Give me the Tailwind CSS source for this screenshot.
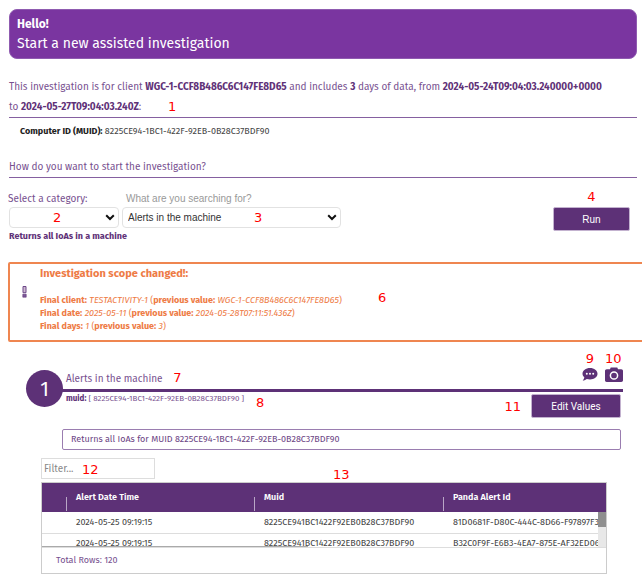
<!DOCTYPE html>
<html lang="en">
  <head>
    <meta charset="UTF-8" />
    <meta name="viewport" content="width=device-width, initial-scale=1.0" />
    <title>Assisted investigation</title>
    <script src="https://cdn.jsdelivr.net/npm/@tailwindcss/browser@4"></script>
  </head>
  <body class="overflow-x-hidden bg-white font-['Fira_Sans','Noto_Sans',sans-serif] text-[#5f3278]">
    <div class="pt-[9px] pr-[5px] pl-[9px]">
      <header class="rounded-lg border border-[#8f5bb0] bg-[#7a35a0] px-[7px] py-1 text-white">
        <p class="text-xs leading-5 font-bold">Hello!</p>
        <h1 class="text-sm leading-5">Start a new assisted investigation</h1>
      </header>

      <section class="relative mt-[18px] border-b border-[#8560a0] text-[10px] leading-5 text-[#77508f]">
        <p>
          This investigation is for client <b class="text-[#5f3278]">WGC-1-CCF8B486C6C147FE8D65</b> and includes
          <b class="text-[#5f3278]">3</b> days of data, from <b class="text-[#5f3278]">2024-05-24T09:04:03.240000+0000</b><br />
          to <b class="text-[#5f3278]">2024-05-27T09:04:03.240Z</b>:
        </p>
        <span class="absolute bottom-0 left-[159px] font-['DejaVu_Sans',sans-serif] text-[13px] text-[#f00]">1</span>
      </section>

      <p class="mt-[5px] pl-[11px] text-[9px] leading-4 text-[#444]">
        <b class="text-[#222]">Computer ID (MUID):</b> 8225CE94-1BC1-422F-92EB-0B28C37BDF90
      </p>

      <h2 class="mt-[18px] border-b border-[#8560a0] text-[10px] leading-5 text-[#77508f]">How do you want to start the investigation?</h2>

      <form class="mt-[13px] flex items-start justify-between pr-[7px]">
        <div>
          <div class="flex gap-[3px]">
            <div class="w-[110px]">
              <label for="category" class="-ml-px block text-[10px] leading-4 text-[#77508f]">Select a category:</label>
              <div class="relative">
                <select id="category" class="block h-[21px] w-full appearance-none rounded-sm border border-[#e2e2e2] bg-white px-[5px]">
                  <option></option>
                </select>
                <svg class="pointer-events-none absolute top-[7px] right-1 h-[7px] w-2.5" viewBox="0 0 10 7" fill="none" stroke="#111" stroke-width="2"><path d="M1.2 1.2 5 5l3.800-3.800" /></svg>
                <span class="absolute top-0 left-11 font-['DejaVu_Sans',sans-serif] text-[13px] leading-[22px] text-[#f00]">2</span>
              </div>
            </div>
            <div class="w-[219px]">
              <label for="search" class="block pl-1 font-['Liberation_Sans',sans-serif] text-[10px] leading-4 text-[#999]">What are you searching for?</label>
              <div class="relative">
                <select id="search" class="block h-[21px] w-full appearance-none rounded-sm border border-[#e2e2e2] bg-white px-[5px] font-['Liberation_Sans',sans-serif] text-[10px] text-[#333]">
                  <option>Alerts in the machine</option>
                </select>
                <svg class="pointer-events-none absolute top-[7px] right-1 h-[7px] w-2.5" viewBox="0 0 10 7" fill="none" stroke="#111" stroke-width="2"><path d="M1.2 1.2 5 5l3.800-3.800" /></svg>
                <span class="absolute top-0 left-[132px] font-['DejaVu_Sans',sans-serif] text-[13px] leading-[22px] text-[#f00]">3</span>
              </div>
            </div>
          </div>
          <p class="text-[9px] leading-4 font-bold">Returns all IoAs in a machine</p>
        </div>
        <div class="relative pt-4">
          <span class="absolute -top-px inset-x-0 text-center font-['DejaVu_Sans',sans-serif] text-[13px] leading-none text-[#f00]">4</span>
          <button type="button" class="block h-6 w-[77px] rounded-xs border border-[#c3b2cf] bg-[#5d3177] font-['Liberation_Sans',sans-serif] text-[10px] text-white">Run</button>
        </div>
      </form>
    </div>

    <section class="relative mt-[18px] -mr-1 ml-2 flex rounded-xs border-2 border-[#ef8650] pt-px pb-[7px] text-[#ee7b45]">
      <svg class="mt-[21px] ml-3 h-3 w-[5px] shrink-0" viewBox="0 0 5 12">
        <path d="M1 .5h3v6.200H1Z" fill="#cdb8d2" stroke="#6c4788" />
        <path d="M.8 8.200h3.400v3H.8Z" fill="#7b5998" stroke="#5f3278" stroke-width=".6" />
      </svg>
      <div class="ml-[13px] text-[9px] leading-[13px]">
        <h3 class="mb-[11px] text-[11px] leading-[18px] font-bold">Investigation scope changed!:</h3>
        <p><b>Final client:</b> <i>TESTACTIVITY-1</i> (<b>previous value:</b> <i>WGC-1-CCF8B486C6C147FE8D65</i>)</p>
        <p><b>Final date:</b> <i>2025-05-11</i> (<b>previous value:</b> <i>2024-05-28T07:11:51.436Z</i>)</p>
        <p><b>Final days:</b> <i>1</i> (<b>previous value:</b> <i>3</i>)</p>
      </div>
      <span class="absolute top-[26px] left-[368px] font-['DejaVu_Sans',sans-serif] text-[13px] leading-4 text-[#f00]">6</span>
    </section>

    <section class="mt-7 pr-[19px] pl-[26px]">
      <div class="flex">
        <div class="-mr-px flex size-[37px] shrink-0 items-center justify-center rounded-full bg-[#5d3177] text-xl text-white">1</div>
        <div class="grow">
          <div class="flex h-[22px] items-end justify-between border-b-[3px] border-[#5d3177] pl-1">
            <h3 class="text-[10px] leading-5 text-[#77508f]">Alerts in the machine <span class="ml-2 font-['DejaVu_Sans',sans-serif] text-[13px] text-[#f00]">7</span></h3>
            <div class="flex gap-[7px] pb-[7px]">
              <button type="button" aria-label="Comments" class="relative h-[15px] w-4">
                <span class="absolute -top-4 left-0 w-full text-center font-['DejaVu_Sans',sans-serif] text-[13px] leading-4 text-[#f00]">9</span>
                <svg class="h-[15px] w-4" viewBox="0 0 16 15" fill="#5d3177">
                  <path d="M8 1c4.200 0 7.500 2.500 7.500 5.700s-3.300 5.700-7.500 5.700c-1.200 0-2.200-.2-3.200-.5-1 .8-2.300 1.500-4.100 1.500.9-.9 1.500-2 1.600-3.100C1.200 9.300.5 8.100.5 6.700.5 3.500 3.800 1 8 1Z" />
                  <g fill="#fff"><circle cx="4.800" cy="6.700" r="1" /><circle cx="8" cy="6.700" r="1" /><circle cx="11.200" cy="6.700" r="1" /></g>
                </svg>
              </button>
              <button type="button" aria-label="Screenshot" class="relative h-[15px] w-[18px]">
                <span class="absolute -top-4 left-0 font-['DejaVu_Sans',sans-serif] text-[13px] leading-4 text-[#f00]">10</span>
                <svg class="h-[15px] w-[18px]" viewBox="0 0 18 15">
                  <path d="M5 2.300 5.700.5h6.600L13 2.300h3.300c1 0 1.700.7 1.700 1.700v9.300c0 1-.7 1.700-1.700 1.700H1.700C.7 15 0 14.300 0 13.300V4c0-1 .7-1.700 1.700-1.700Z" fill="#5d3177" />
                  <circle cx="9" cy="8.500" r="3.600" fill="none" stroke="#fff" stroke-width="1.500" />
                </svg>
              </button>
            </div>
          </div>
          <div class="flex items-start justify-between pr-0.5 pl-1">
            <p class="relative text-[8px] leading-[14px] text-[#77508f]">
              <b class="text-[#5f3278]">muid:</b> [ 8225CE94-1BC1-422F-92EB-0B28C37BDF90 ]
              <span class="absolute top-[3px] left-[190px] font-['DejaVu_Sans',sans-serif] text-[13px] leading-4 text-[#f00]">8</span>
            </p>
            <div class="flex items-center gap-2.5 pt-0.5">
              <span class="font-['DejaVu_Sans',sans-serif] text-[13px] leading-none text-[#f00]">11</span>
              <button type="button" class="block h-6 w-[90px] rounded-xs border border-[#c3b2cf] bg-[#5d3177] font-['Roboto',sans-serif] text-[10px] text-white">Edit Values</button>
            </div>
          </div>
        </div>
      </div>

      <p class="mt-[11px] mr-0.5 ml-9 rounded-xs border border-[#9a7db0] px-2 text-[9px] leading-[19px] text-[#6b4484]">Returns all IoAs for MUID 8225CE94-1BC1-422F-92EB-0B28C37BDF90</p>

      <div class="relative mt-2 ml-[15px]">
        <input type="text" aria-label="Filter" placeholder="Filter..." class="block h-[21px] w-[114px] border border-[#ddd] px-0.5 text-[10px] placeholder:text-[#888]" />
        <span class="absolute top-0.5 left-[41px] font-['DejaVu_Sans',sans-serif] text-[13px] leading-5 text-[#f00]">12</span>
        <span class="absolute top-[9px] left-[292px] font-['DejaVu_Sans',sans-serif] text-[13px] leading-4 text-[#f00]">13</span>
      </div>

      <div class="mt-[3px] mr-4 ml-[15px] border border-[#ccc]">
        <div class="relative h-[65px] overflow-hidden border-b border-[#ddd]">
          <table class="w-full table-fixed border-collapse text-left text-[9px] whitespace-nowrap text-[#444]">
            <thead class="bg-[#5d3177] text-white">
              <tr class="h-[29px] align-bottom">
                <th class="w-6"></th>
                <th class="w-[188px]">
                  <div class="mb-px flex h-5 gap-[9px] leading-[13px] font-semibold"><span class="h-3.5 w-px self-end bg-[#b9a6c6]"></span>Alert Date Time</div>
                </th>
                <th class="w-[189px]">
                  <div class="mb-px flex h-5 gap-[9px] leading-[13px] font-semibold"><span class="h-3.5 w-px self-end bg-[#b9a6c6]"></span>Muid</div>
                </th>
                <th>
                  <div class="mb-px flex h-5 gap-[9px] leading-[13px] font-semibold"><span class="h-3.5 w-px self-end bg-[#b9a6c6]"></span>Panda Alert Id</div>
                </th>
              </tr>
            </thead>
            <tbody>
              <tr class="h-[21px] border-b border-[#ddd]">
                <td></td>
                <td class="pl-2.5">2024-05-25 09:19:15</td>
                <td class="pl-2.5">8225CE941BC1422F92EB0B28C37BDF90</td>
                <td class="overflow-hidden pl-2.5">81D0681F-D80C-444C-8D66-F97897F3E</td>
              </tr>
              <tr class="h-5">
                <td></td>
                <td class="pl-2.5">2024-05-25 09:19:15</td>
                <td class="pl-2.5">8225CE941BC1422F92EB0B28C37BDF90</td>
                <td class="overflow-hidden pl-2.5">B32C0F9F-E6B3-4EA7-875E-AF32ED06D</td>
              </tr>
            </tbody>
          </table>
          <div class="absolute top-[29px] right-0 bottom-0 w-2 bg-[#e8e8e8]"><div class="h-[15px] bg-[#8f8f8f]"></div></div>
          <div class="absolute bottom-0 left-0 h-px w-[266px] bg-[#aaa]"></div>
        </div>
        <p class="pl-3.5 text-[9px] leading-[25px] text-[#77508f]">Total Rows: 120</p>
      </div>
    </section>
  </body>
</html>
